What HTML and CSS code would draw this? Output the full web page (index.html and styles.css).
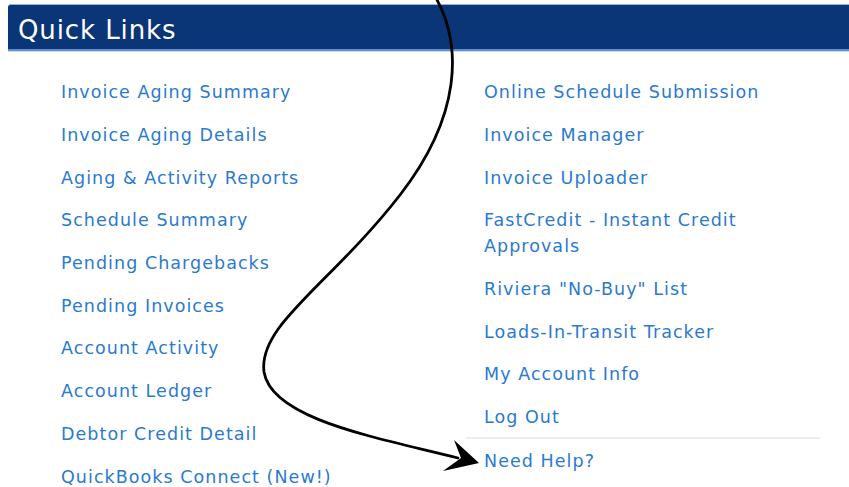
FILE: index.html
```html
<!DOCTYPE html>
<html lang="en">
<head>
<meta charset="utf-8">
<title>Quick Links</title>
<link rel="stylesheet" href="styles.css">
</head>
<body>
<section class="panel">
  <h2 class="panel-title">Quick Links</h2>
  <div class="link-grid">
    <ul class="link-list">
      <li><a href="#">Invoice Aging Summary</a></li>
      <li><a href="#">Invoice Aging Details</a></li>
      <li><a href="#">Aging &amp; Activity Reports</a></li>
      <li><a href="#">Schedule Summary</a></li>
      <li><a href="#">Pending Chargebacks</a></li>
      <li><a href="#">Pending Invoices</a></li>
      <li><a href="#">Account Activity</a></li>
      <li><a href="#">Account Ledger</a></li>
      <li><a href="#">Debtor Credit Detail</a></li>
      <li><a href="#">QuickBooks Connect (New!)</a></li>
    </ul>
    <ul class="link-list">
      <li><a href="#">Online Schedule Submission</a></li>
      <li><a href="#">Invoice Manager</a></li>
      <li><a href="#">Invoice Uploader</a></li>
      <li><a href="#">FastCredit - Instant Credit Approvals</a></li>
      <li><a href="#">Riviera "No-Buy" List</a></li>
      <li><a href="#">Loads-In-Transit Tracker</a></li>
      <li><a href="#">My Account Info</a></li>
      <li><a href="#">Log Out</a></li>
      <li class="help-item"><a href="#">Need Help?</a></li>
    </ul>
  </div>
</section>
<svg class="pointer-arrow" width="849" height="487" viewBox="0 0 849 487" aria-hidden="true">
  <path d="M436,-2 C462,45 462,115 400,195 C330,285 258,325 264,372 C272,420 380,438 458,458" fill="none" stroke="#000" stroke-width="2.8" stroke-linecap="round"/>
  <path d="M479,463 L454,440 L461,458 L443,471 Z" fill="#000"/>
</svg>
</body>
</html>
```
FILE: styles.css
```css
html, body {
  margin: 0;
  padding: 0;
  background: #fff;
}

body {
  position: relative;
  padding: 4px 0 0 8px;
  font-family: "DejaVu Sans", Verdana, sans-serif;
  overflow: hidden;
  height: 487px;
  box-sizing: border-box;
}

.panel-title {
  margin: 0;
  height: 44px;
  padding-left: 10px;
  background: #0a3577;
  border-top: 1px solid #9db2d4;
  border-bottom: 2px solid #5f8fcc;
  border-top-left-radius: 3px;
  color: #fff;
  font-weight: normal;
  font-size: 26px;
  letter-spacing: 0.9px;
  line-height: 50px;
  box-shadow: 0 1px 0 #c9dcf2;
}

.link-grid {
  display: grid;
  grid-template-columns: 423px 354px;
  margin: 20px 0 0 35px;
}

.link-list {
  list-style: none;
  margin: 0;
  padding: 0;
}

.link-list li {
  padding: 8.35px 0 8.35px 18px;
  line-height: 26px;
  font-size: 17.5px;
  letter-spacing: 1.05px;
}

.link-list a {
  color: #2a7ad0;
  text-decoration: none;
}

.link-list .help-item {
  margin-top: -2px;
  border-top: 2px solid #eeeeee;
  padding-top: 9px;
}

.pointer-arrow {
  position: absolute;
  left: 0;
  top: 0;
  pointer-events: none;
}
```
